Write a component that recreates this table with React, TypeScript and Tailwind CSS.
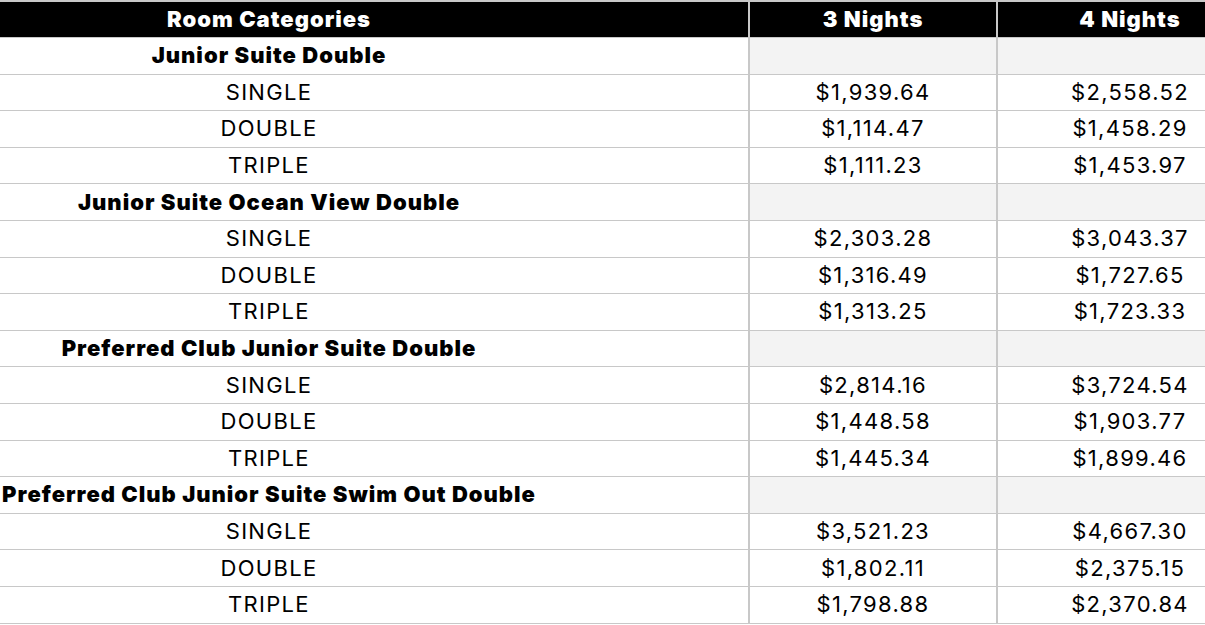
const groups = [
  {
    name: 'Junior Suite Double',
    rows: [
      ['SINGLE', '$1,939.64', '$2,558.52'],
      ['DOUBLE', '$1,114.47', '$1,458.29'],
      ['TRIPLE', '$1,111.23', '$1,453.97'],
    ],
  },
  {
    name: 'Junior Suite Ocean View Double',
    rows: [
      ['SINGLE', '$2,303.28', '$3,043.37'],
      ['DOUBLE', '$1,316.49', '$1,727.65'],
      ['TRIPLE', '$1,313.25', '$1,723.33'],
    ],
  },
  {
    name: 'Preferred Club Junior Suite Double',
    rows: [
      ['SINGLE', '$2,814.16', '$3,724.54'],
      ['DOUBLE', '$1,448.58', '$1,903.77'],
      ['TRIPLE', '$1,445.34', '$1,899.46'],
    ],
  },
  {
    name: 'Preferred Club Junior Suite Swim Out Double',
    rows: [
      ['SINGLE', '$3,521.23', '$4,667.30'],
      ['DOUBLE', '$1,802.11', '$2,375.15'],
      ['TRIPLE', '$1,798.88', '$2,370.84'],
    ],
  },
]

const row = 'grid grid-cols-[750px_248px_266px] h-[36.6px] border-b border-[#c8c8c8]'
const cell = 'flex items-center justify-center border-r-2 border-[#c8c8c8]'

export default function App() {
  return (
    <div className="w-[1205px] h-[625px] overflow-hidden bg-white text-black font-['Inter','Liberation_Sans',sans-serif] text-[22px] tracking-[1.3px]">
      <div className="w-[1264px]">
        {/* header */}
        <div className="grid grid-cols-[750px_248px_266px] h-[38px] border-t-2 border-b border-[#c8c8c8] bg-black text-white font-black tracking-[1px]">
          <div className="flex items-center border-r-2 border-[#c8c8c8]">
            <div className="w-[538px] text-center">Room Categories</div>
          </div>
          <div className={cell}>3 Nights</div>
          <div className={cell}>4 Nights</div>
        </div>

        {groups.map((g) => (
          <div key={g.name}>
            <div className={row}>
              <div className="flex items-center border-r-2 border-[#c8c8c8]">
                <div className="w-[538px] text-center font-black tracking-[1px] whitespace-nowrap">{g.name}</div>
              </div>
              <div className={`${cell} bg-[#f3f3f3]`} />
              <div className={`${cell} bg-[#f3f3f3]`} />
            </div>
            {g.rows.map(([type, three, four]) => (
              <div key={type} className={row}>
                <div className="flex items-center border-r-2 border-[#c8c8c8]">
                  <div className="w-[538px] text-center">{type}</div>
                </div>
                <div className={cell}>{three}</div>
                <div className={cell}>{four}</div>
              </div>
            ))}
          </div>
        ))}
      </div>
    </div>
  )
}
